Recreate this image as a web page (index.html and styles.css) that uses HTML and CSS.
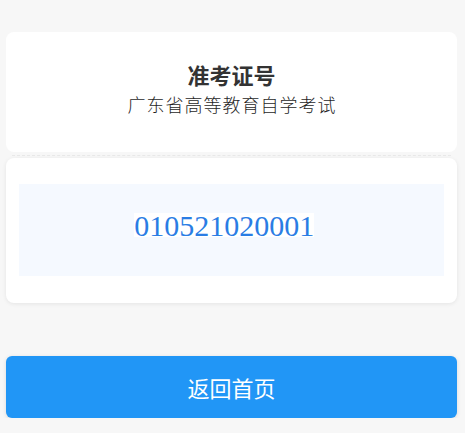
FILE: index.html
```html
<!DOCTYPE html>
<html lang="zh-CN">
<head>
<meta charset="utf-8">
<title>准考证号</title>
<link rel="stylesheet" href="styles.css">
</head>
<body>
<div class="page">
  <section class="card head">
    <h1 class="title">准考证号</h1>
    <p class="subtitle">广东省高等教育自学考试</p>
  </section>
  <div class="divider"></div>
  <section class="card body">
    <div class="numbox"><span class="num">010521020001</span></div>
  </section>
  <button class="btn">返回首页</button>
</div>
</body>
</html>
```
FILE: styles.css
```css
html, body {
  margin: 0;
  padding: 0;
  background: #f7f7f7;
}
body {
  font-family: "Noto Sans CJK SC", "Noto Sans", sans-serif;
  color: #333;
}
.page {
  padding: 32px 8px 0 6px;
  display: flex;
  flex-direction: column;
}
.card {
  background: #fff;
  border-radius: 8px;
}
.head {
  height: 120px;
  display: flex;
  flex-direction: column;
  align-items: center;
  padding-top: 26px;
  box-sizing: border-box;
}
.title {
  margin: 0;
  font-size: 22px;
  font-weight: 700;
  line-height: 32px;
  color: #333;
}
.subtitle {
  margin: 0;
  font-family: "Noto Sans CJK SC", sans-serif;
  font-size: 18px;
  font-weight: 300;
  letter-spacing: 1px;
  line-height: 28px;
  margin-right: -1px;
  color: #1f1f1f;
}
.divider {
  margin: 3px 6px 0;
  border-top: 1px dashed #e9e9e9;
  height: 2px;
}
.body {
  padding: 26px 13px 27px 12.5px;
  box-shadow: 0 1px 4px rgba(0,0,0,0.08);
}
.numbox {
  height: 92px;
  background: #f5f9ff;
  display: flex;
  align-items: center;
  justify-content: center;
  padding-bottom: 10px;
  padding-right: 14px;
  box-sizing: border-box;
}
.num {
  display: inline-block;
  background: #fff;
  font-family: "Liberation Serif", "Times New Roman", serif;
  font-size: 30px;
  line-height: 23px;
  height: 23px;
  color: #2a7de4;
  padding-top: 1px;
}
.btn {
  margin-top: 53px;
  height: 62px;
  border: none;
  border-radius: 6px;
  background: #2196f6;
  color: #fff;
  font-family: "Noto Sans CJK SC", "Noto Sans", sans-serif;
  font-size: 22px;
  box-shadow: 0 1px 4px rgba(0,0,0,0.12);
  padding: 0;
}
```
